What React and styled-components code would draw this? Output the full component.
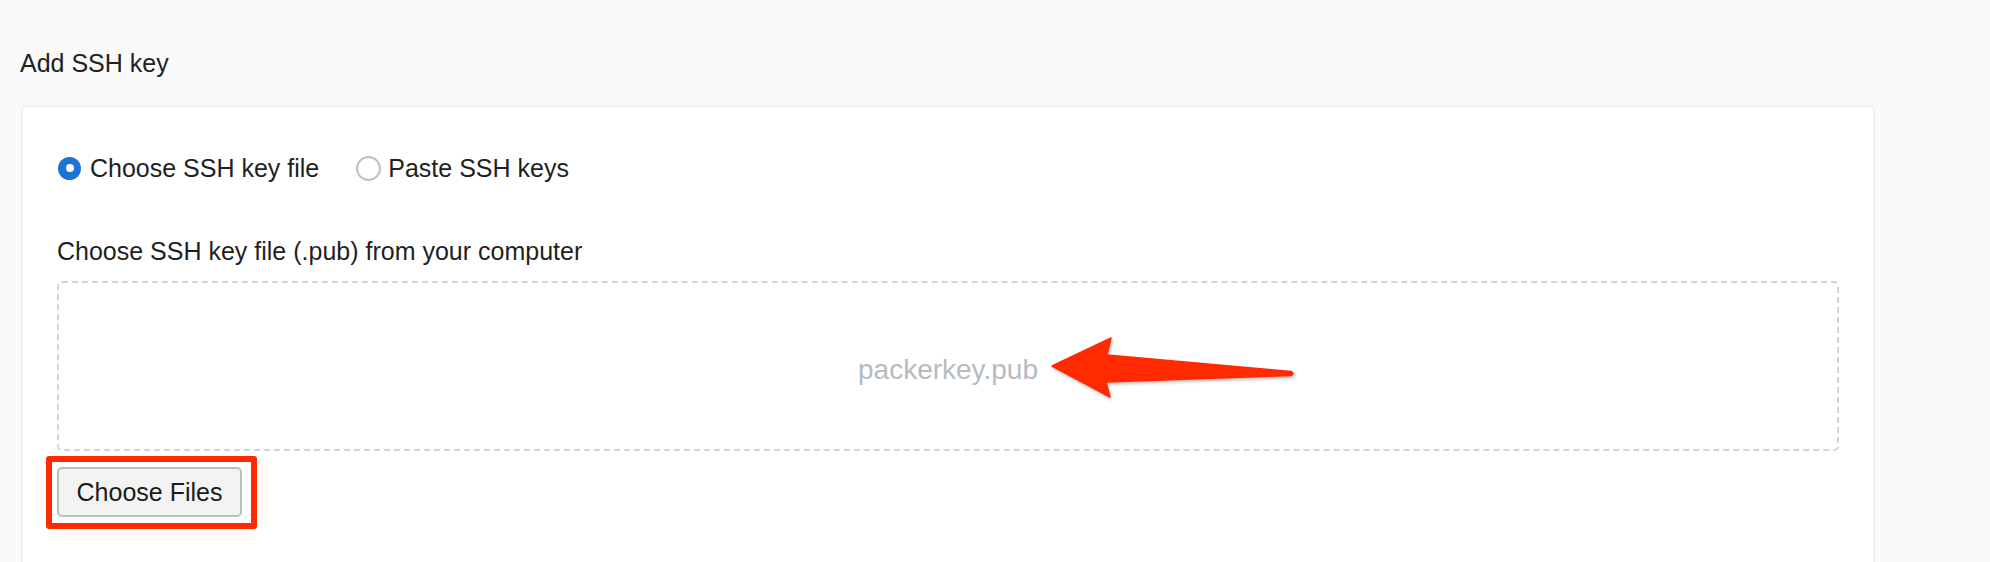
import React from "react";
import styled, { createGlobalStyle } from "styled-components";

const Global = createGlobalStyle`
  html, body { margin: 0; padding: 0; background: #fafafa; }
  body { font-family: "Liberation Sans", Arial, Helvetica, sans-serif; color: #222; }
  * { box-sizing: border-box; }
`;

const Page = styled.div`
  padding: 48px 0 0 20px;
  width: 1875px;
  height: 562px;
  overflow: hidden;
`;

const Title = styled.h2`
  margin: 0;
  font-size: 25px;
  font-weight: 400;
  line-height: 30px;
  color: #222;
`;

const Card = styled.section`
  margin-top: 27px;
  margin-left: 1px;
  background: #fff;
  border: 2px solid #efefef;
  border-radius: 5px;
  padding: 48px 34px 60px 34px;
  min-height: 520px;
`;

const RadioRow = styled.div`
  display: flex;
  align-items: center;
  height: 26px;
  gap: 37px;
`;

const RadioOption = styled.label`
  display: flex;
  align-items: center;
  gap: ${(p) => (p.$checked ? "9px" : "7px")};
  font-size: 25px;
  line-height: 26px;
  color: #1f1f1f;
`;

const RadioCircle = styled.span`
  width: ${(p) => (p.$checked ? "23px" : "25px")};
  height: ${(p) => (p.$checked ? "23px" : "25px")};
  border-radius: 50%;
  flex: none;
  margin-left: ${(p) => (p.$checked ? "1px" : "0")};
  background: ${(p) => (p.$checked ? "#1b73d6" : "#fff")};
  border: ${(p) => (p.$checked ? "none" : "2px solid #bcc0c6")};
  display: flex;
  align-items: center;
  justify-content: center;
  &::after {
    content: "";
    display: ${(p) => (p.$checked ? "block" : "none")};
    width: 8px;
    height: 8px;
    border-radius: 50%;
    background: #fff;
  }
`;

const FieldLabel = styled.div`
  margin-top: 55px;
  font-size: 25px;
  line-height: 30px;
  color: #1f1f1f;
`;

const DropZone = styled.div`
  position: relative;
  margin-top: 15px;
  height: 170px;
  border: 2px dashed #d2d5d8;
  border-radius: 5px;
  display: flex;
  align-items: center;
  justify-content: center;
  padding-top: 8px;
`;

const FileName = styled.span`
  font-size: 28px;
  color: #b5bbc2;
`;

const ArrowSvg = styled.svg`
  position: absolute;
  left: 990px;
  top: 52px;
  width: 250px;
  height: 66px;
  overflow: visible;
  filter: drop-shadow(1px 2px 1.5px rgba(0, 0, 0, 0.25));
`;

const ButtonWrap = styled.div`
  position: relative;
  display: inline-block;
  margin-top: 16px;
`;

const Highlight = styled.span`
  position: absolute;
  left: -11px;
  top: -11px;
  right: -15px;
  bottom: -12px;
  border: 6px solid #ff2a00;
  border-radius: 3px;
  pointer-events: none;
`;

const FileButton = styled.button`
  width: 185px;
  height: 50px;
  background: #f3f3f3;
  border: 2px solid #b9bdc3;
  border-radius: 5px;
  font-family: "Liberation Sans", Arial, Helvetica, sans-serif;
  font-size: 25px;
  color: #1a1a1a;
  padding: 0;
  display: block;
`;

export default function App() {
  return (
    <>
      <Global />
      <Page>
        <Title>Add SSH key</Title>
        <Card>
          <RadioRow>
            <RadioOption $checked>
              <RadioCircle $checked />
              Choose SSH key file
            </RadioOption>
            <RadioOption>
              <RadioCircle />
              Paste SSH keys
            </RadioOption>
          </RadioRow>
          <FieldLabel>Choose SSH key file (.pub) from your computer</FieldLabel>
          <DropZone>
            <FileName>packerkey.pub</FileName>
            <ArrowSvg viewBox="1050 335 250 66">
              <path
                d="M1053 366 L1112 338 L1108 355 L1292 371.5 Q1296 373.5 1292 375.5 L1107 382 L1111 397 Z"
                fill="#ff2a00"
                stroke="#ff2a00"
                strokeWidth="1.5"
                strokeLinejoin="round"
              />
            </ArrowSvg>
          </DropZone>
          <ButtonWrap>
            <FileButton>Choose Files</FileButton>
            <Highlight />
          </ButtonWrap>
        </Card>
      </Page>
    </>
  );
}
